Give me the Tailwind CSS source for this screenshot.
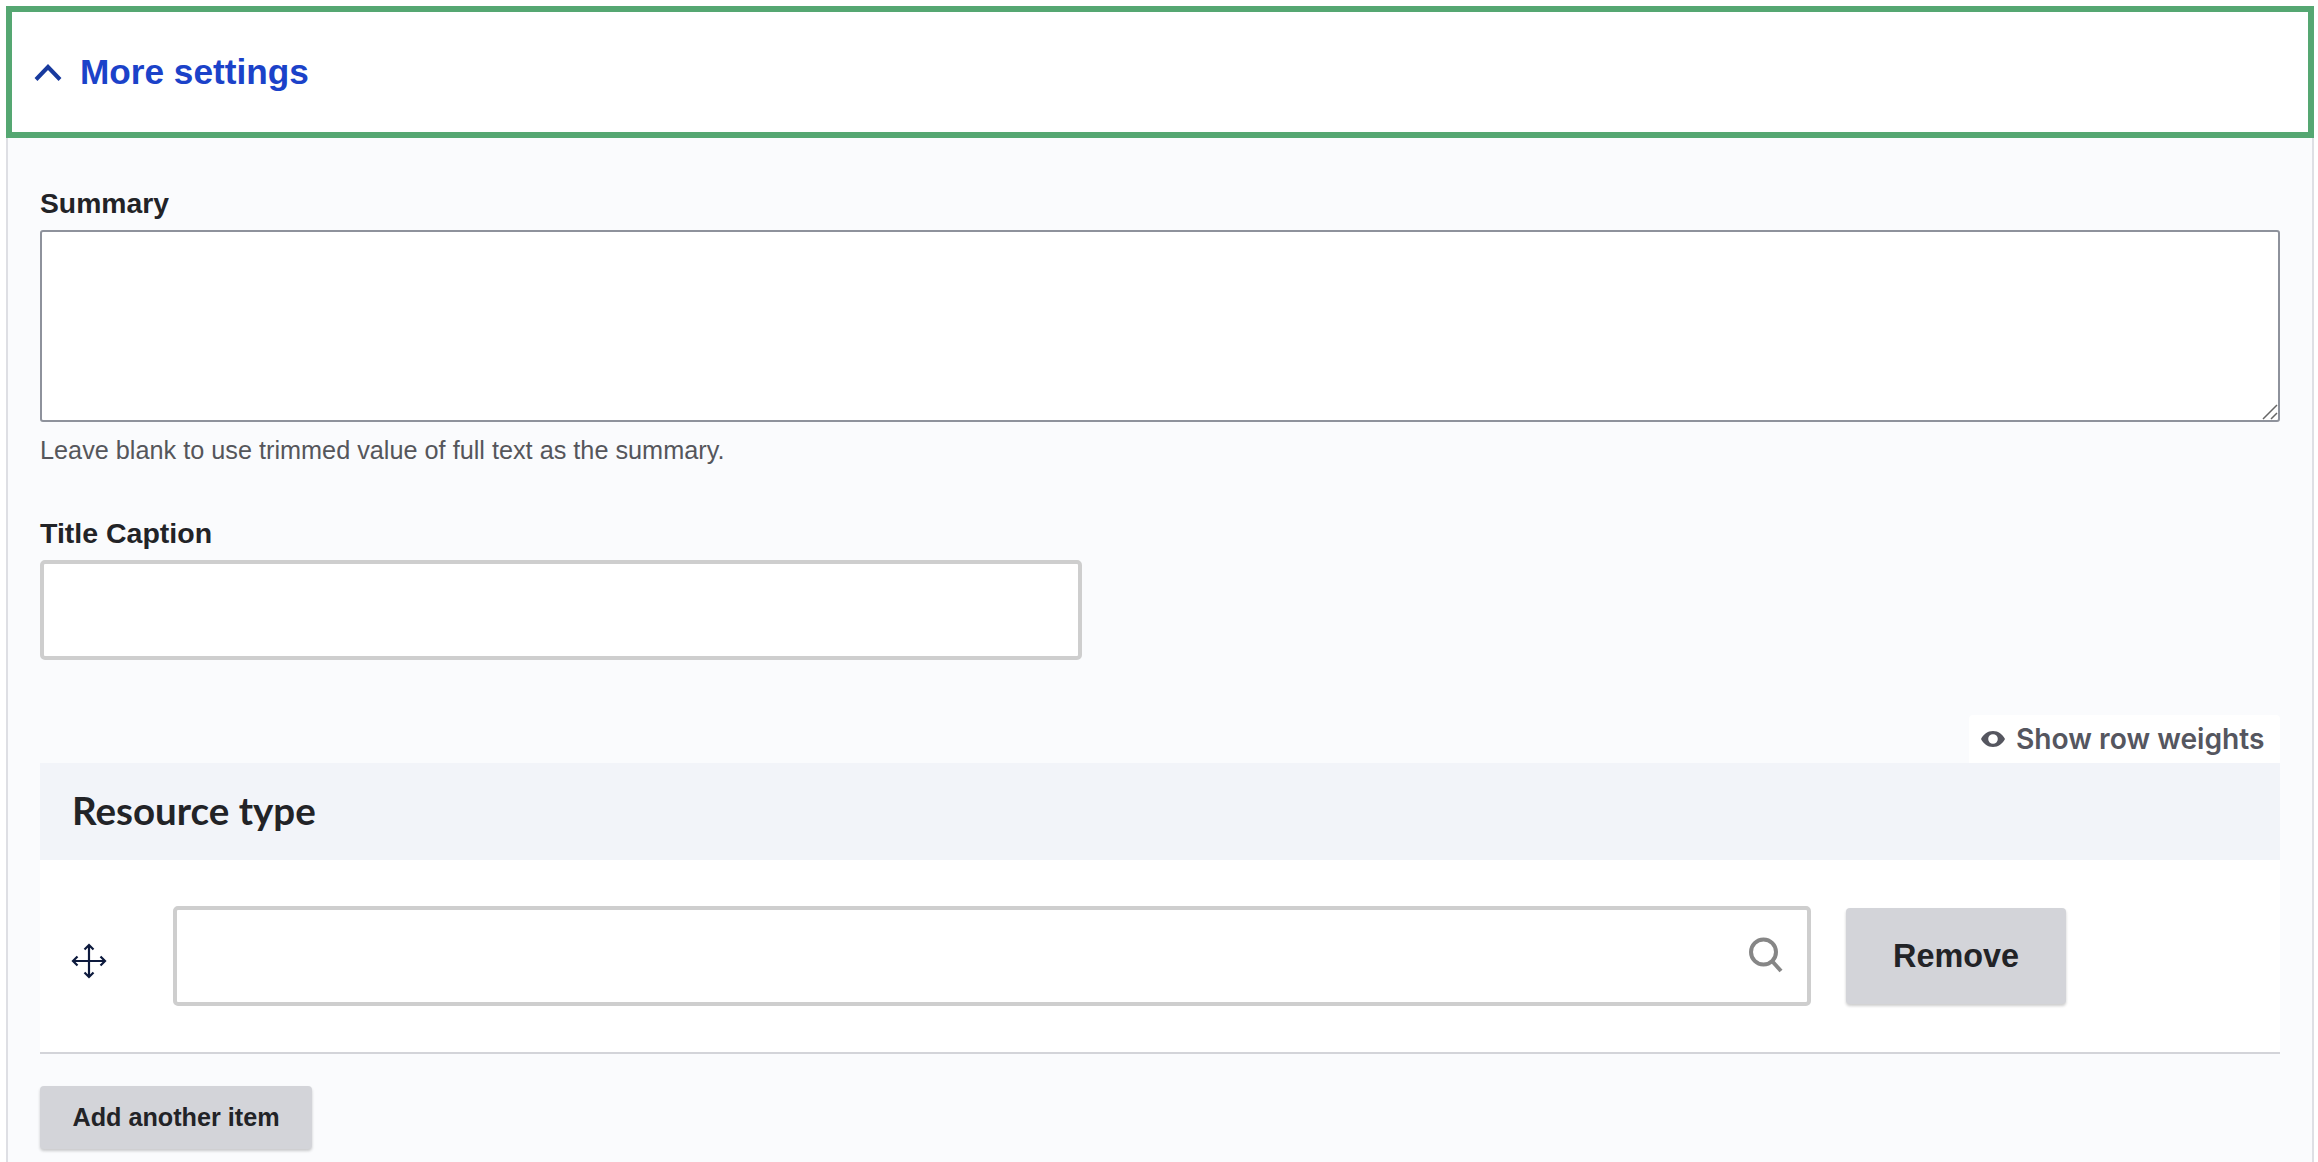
<!DOCTYPE html>
<html lang="en"><head><meta charset="utf-8"><title>More settings</title>
<script src="https://cdn.jsdelivr.net/npm/@tailwindcss/browser@4"></script></head>
<body class="bg-white font-['Liberation_Sans',Arial,sans-serif] text-[#222327] overflow-hidden">
<div class="h-[1162px] pt-[6px] pl-[6px] pr-[4px]">
  <div class="h-[132px] border-[6px] border-[#55a772] bg-white flex items-center pl-[22px] gap-[18px]">
    <svg width="28" height="18" viewBox="0 0 28 18" fill="none" class="shrink-0 mt-[1px]"><path d="M2 15.500 L14 3 L26 15.500" stroke="#183a9e" stroke-width="4"/></svg>
    <span class="text-[35.200px] leading-none font-bold text-[#1b42c9]">More settings</span>
  </div>
  <div class="h-[1024px] bg-[#fafbfd] border-x-2 border-[#dedfe4] pl-[32px] pr-[32px] w-[2308px]">
    <label class="block pt-[49px] text-[28.300px] leading-[32px] font-bold text-[#222327]">Summary</label>
    <div class="relative mt-[11px] w-[2240px] h-[192px] bg-white border-2 border-[#8e929c] rounded-[3px]">
      <svg width="16" height="16" viewBox="0 0 16 16" fill="none" stroke="#666" stroke-width="1.500" class="absolute right-0 bottom-0"><path d="M1 15L15 1M9 15L15 9"/></svg>
    </div>
    <p class="mt-[14px] text-[25.250px] leading-[28px] text-[#55565b]">Leave blank to use trimmed value of full text as the summary.</p>
    <label class="block mt-[53px] mb-[11px] text-[28.500px] leading-[32px] font-bold text-[#222327]">Title Caption</label>
    <div class="w-[1042px] h-[100px] bg-white border-4 border-[#cecece] rounded-[5px]"></div>
    <div class="mt-[55px] flex justify-end">
      <button class="h-[48px] w-[311px] bg-white rounded-t-[4px] flex items-center pl-[12px] gap-[11px] font-['Inter',sans-serif] font-semibold text-[28.200px] text-[#55565f]">
        <svg width="24" height="16" viewBox="0 0 24 16" class="shrink-0"><path fill="#55565f" fill-rule="evenodd" d="M12 0C6.500 0 2.500 3.500 0 8c2.500 4.500 6.500 8 12 8s9.500-3.500 12-8c-2.500-4.500-6.500-8-12-8zm0 3.200a4.800 4.800 0 1 1 0 9.600 4.800 4.800 0 0 1 0-9.600z"/></svg>
        <span>Show row weights</span>
      </button>
    </div>
    <div class="h-[97px] bg-[#f2f4f9] flex items-center pl-[32px] pb-[2px] font-['Lato',sans-serif] font-bold text-[38.500px] text-[#222327]">Resource type</div>
    <div class="h-[194px] bg-white border-b-2 border-[#d3d4d9] flex items-start">
      <svg width="36" height="36" viewBox="0 0 36 36" fill="none" stroke="#0d1a3d" stroke-width="2.200" class="shrink-0 ml-[31px] mt-[83px]"><path d="M18 2V34M2 18H34M13.500 6.500L18 2l4.500 4.500M13.500 29.500L18 34l4.500-4.500M6.500 13.500L2 18l4.500 4.500M29.500 13.500L34 18l-4.500 4.500"/></svg>
      <div class="relative ml-[66px] mt-[46px] w-[1638px] h-[100px] bg-white border-4 border-[#cecece] rounded-[5px] shrink-0">
        <svg width="36" height="36" viewBox="0 0 36 36" fill="none" stroke="#868686" stroke-width="4" class="absolute left-[1571px] top-[27px]"><circle cx="15.500" cy="15" r="12.500"/><path d="M24 24 L33 34"/></svg>
      </div>
      <button class="ml-[35px] mt-[48px] w-[220px] h-[96px] bg-[#d3d4d9] rounded-[4px] shadow-[0_2px_3px_rgba(0,0,0,0.2)] text-[32.400px] font-bold text-[#222327] shrink-0">Remove</button>
    </div>
    <button class="block mt-[32px] w-[272px] h-[63px] bg-[#d3d4d9] rounded-[4px] shadow-[0_2px_3px_rgba(0,0,0,0.2)] text-[25.200px] font-bold text-[#222327]">Add another item</button>
  </div>
</div>
</body></html>
